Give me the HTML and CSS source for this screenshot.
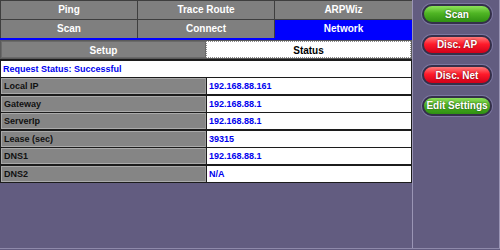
FILE: index.html
```html
<!DOCTYPE html>
<html lang="en">
<head>
    <meta charset="UTF-8">
    <title>Network Status</title>
    <link rel="stylesheet" href="styles.css">
</head>
<body>
    <div class="screen">
        <div class="main">
            <div class="tabs">
                <div class="tab">Ping</div>
                <div class="tab">Trace Route</div>
                <div class="tab">ARPWiz</div>
                <div class="tab">Scan</div>
                <div class="tab">Connect</div>
                <div class="tab active">Network</div>
            </div>
            <div class="tab-line"></div>
            <div class="subtabs">
                <div class="subtab">Setup</div>
                <div class="subtab current">Status</div>
            </div>
            <div class="status-table">
                <div class="request">Request Status: Successful</div>
                <div class="label">Local IP</div><div class="value">192.168.88.161</div>
                <div class="label">Gateway</div><div class="value">192.168.88.1</div>
                <div class="label">ServerIp</div><div class="value">192.168.88.1</div>
                <div class="label">Lease (sec)</div><div class="value">39315</div>
                <div class="label">DNS1</div><div class="value">192.168.88.1</div>
                <div class="label">DNS2</div><div class="value">N/A</div>
            </div>
        </div>
        <div class="side">
            <button class="pill green">Scan</button>
            <button class="pill red">Disc. AP</button>
            <button class="pill red">Disc. Net</button>
            <button class="pill green">Edit Settings</button>
        </div>
    </div>
</body>
</html>
```

FILE: styles.css
```css
body {
    margin: 0;
    width: 500px;
    height: 250px;
    overflow: hidden;
    background-color: #625c80;
    font-family: 'Liberation Sans', Arial, sans-serif;
    font-weight: bold;
}
.screen {
    display: flex;
    height: 248px;
    border-bottom: 1px solid #8e89aa;
}
.main {
    width: 412px;
    border-right: 1px solid #9a95b5;
}
.tabs {
    display: grid;
    grid-template-columns: 136px 136px 137px;
    gap: 1px;
    padding: 1px 1px 0 1px;
    background-color: #3e3e3e;
}
.tab {
    height: 18px;
    line-height: 18px;
    text-align: center;
    font-size: 10px;
    color: white;
    background-color: #7f7f7f;
}
.tab.active {
    background-color: #0000ff;
}
.tab-line {
    height: 2px;
    background-color: #0000ff;
}
.subtabs {
    display: grid;
    grid-template-columns: 205px 205px;
    padding: 1px 1px 1px 1px;
    background-color: #5a5a5a;
}
.subtab {
    height: 17px;
    line-height: 17px;
    text-align: center;
    font-size: 10px;
    color: white;
    background-color: #808080;
    border: 1px solid #6a6a6a;
    box-sizing: border-box;
}
.subtab.current {
    color: black;
    background-color: white;
    border: 1px dotted #8a8a8a;
}
.status-table {
    display: grid;
    grid-template-columns: 205px 204px;
    grid-auto-rows: 16px;
    gap: 1.5px 1px;
    padding: 1.5px 1px;
    background-color: #1c1c1c;
}
.request {
    grid-column: 1 / 3;
    background-color: white;
    color: #0000ee;
    font-size: 9px;
    line-height: 16px;
    padding-left: 2px;
}
.label {
    background-color: #858585;
    border: 1px solid #aaaaaa;
    border-right-color: #999;
    box-sizing: border-box;
    color: #111;
    font-size: 9px;
    line-height: 14px;
    padding-left: 2px;
}
.value {
    background-color: white;
    color: #0000ee;
    font-size: 9px;
    line-height: 16px;
    padding-left: 2px;
}
.side {
    flex: 1;
    display: flex;
    flex-direction: column;
    align-items: center;
    gap: 10.5px;
    padding-top: 4px;
    padding-left: 2px;
    border-right: 1px solid #9a95b5;
}
.pill {
    width: 70px;
    height: 20px;
    border: 2px solid #34304a;
    border-radius: 10px;
    font-family: inherit;
    font-weight: bold;
    font-size: 10px;
    color: white;
    text-shadow: 0 0 2px rgba(0,0,0,0.6);
    padding: 0;
    box-shadow: 0 0 0 1px #7c77a0;
}
.green {
    background: linear-gradient(#8ee25a, #4fb524 45%, #2f8f12);
}
.red {
    background: linear-gradient(#ff7a7a, #ff1a2a 45%, #d0001a);
}
```
